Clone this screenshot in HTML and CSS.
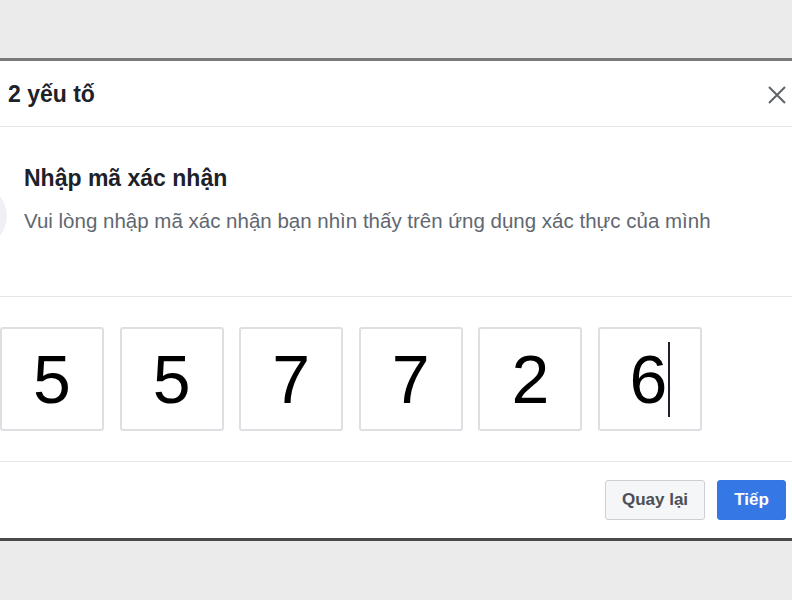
FILE: index.html
```html
<!DOCTYPE html>
<html lang="vi">
<head>
    <meta charset="UTF-8">
    <meta name="viewport" content="width=device-width, initial-scale=1.0">
    <title>2 yếu tố</title>
    <link rel="stylesheet" href="styles.css">
</head>
<body>

<div class="dialog">

    <div class="dialog-header">
        <h2>2 yếu tố</h2>
        <button class="close" aria-label="Đóng">
            <svg width="18" height="18" viewBox="0 0 18 18">
                <path d="M1 1 L17 17 M17 1 L1 17" stroke="#5f6368" stroke-width="2" fill="none"/>
            </svg>
        </button>
    </div>

    <div class="dialog-intro">
        <div class="avatar"></div>
        <div>
            <h3>Nhập mã xác nhận</h3>
            <p>Vui lòng nhập mã xác nhận bạn nhìn thấy trên ứng dụng xác thực của mình</p>
        </div>
    </div>

    <div class="code-row">
        <div class="code-box">5</div>
        <div class="code-box">5</div>
        <div class="code-box">7</div>
        <div class="code-box">7</div>
        <div class="code-box">2</div>
        <div class="code-box">6<span class="caret"></span></div>
    </div>

    <div class="dialog-footer">
        <button class="btn btn-back">Quay lại</button>
        <button class="btn btn-next">Tiếp</button>
    </div>

</div>

</body>
</html>
```

FILE: styles.css
```css
body {
    font-family: "Liberation Sans", Arial, sans-serif;
    margin: 0;
    padding: 58px 0 0;
    background-color: #ebebeb;
    height: 600px;
    box-sizing: border-box;
    overflow: hidden;
}

.dialog {
    background-color: #fff;
    border-top: 3px solid #7a7a7a;
    border-bottom: 3px solid #4a4a4a;
    overflow: hidden;
}

.dialog-header {
    height: 66px;
    display: flex;
    align-items: center;
    justify-content: space-between;
    padding: 2px 6px 0 8px;
    box-sizing: border-box;
    border-bottom: 1px solid #e5e5e5;
}

.dialog-header h2 {
    margin: 0;
    font-size: 23px;
    font-weight: bold;
    color: #1d2129;
}

.close {
    border: none;
    background: none;
    padding: 0;
    width: 18px;
    height: 18px;
    display: flex;
}

.dialog-intro {
    display: flex;
    align-items: flex-start;
    gap: 17px;
    padding: 38px 0 63px;
    border-bottom: 1px solid #e5e5e5;
}

.avatar {
    width: 62px;
    height: 62px;
    margin: 20px 0 -40px -55px;
    border-radius: 50%;
    background-color: #eef0f3;
    flex-shrink: 0;
}

.dialog-intro h3 {
    margin: 0 0 17px;
    font-size: 23px;
    line-height: 27px;
    font-weight: bold;
    color: #1d2129;
}

.dialog-intro p {
    margin: 0;
    font-size: 20.5px;
    line-height: 24px;
    color: #616770;
}

.code-row {
    display: flex;
    gap: 15.6px;
    padding: 30px 0;
    border-bottom: 1px solid #e5e5e5;
}

.code-box {
    width: 104px;
    height: 104px;
    box-sizing: border-box;
    border: 2px solid #dddfe2;
    border-radius: 3px;
    display: flex;
    align-items: center;
    justify-content: center;
    font-size: 68px;
    color: #000;
}

.caret {
    display: inline-block;
    width: 2px;
    height: 75px;
    background-color: #1d2129;
    margin-left: 1px;
}

.dialog-footer {
    display: flex;
    justify-content: flex-end;
    gap: 12px;
    padding: 18px 6px 18px 0;
}

.btn {
    height: 40px;
    font-family: "Liberation Sans", Arial, sans-serif;
    font-size: 17px;
    font-weight: bold;
    border-radius: 3px;
    cursor: pointer;
}

.btn-back {
    width: 100px;
    background-color: #f5f6f7;
    border: 1px solid #ccd0d5;
    color: #4b4f56;
}

.btn-next {
    width: 69px;
    background-color: #3578e5;
    border: 1px solid #3578e5;
    color: #fff;
}
```
